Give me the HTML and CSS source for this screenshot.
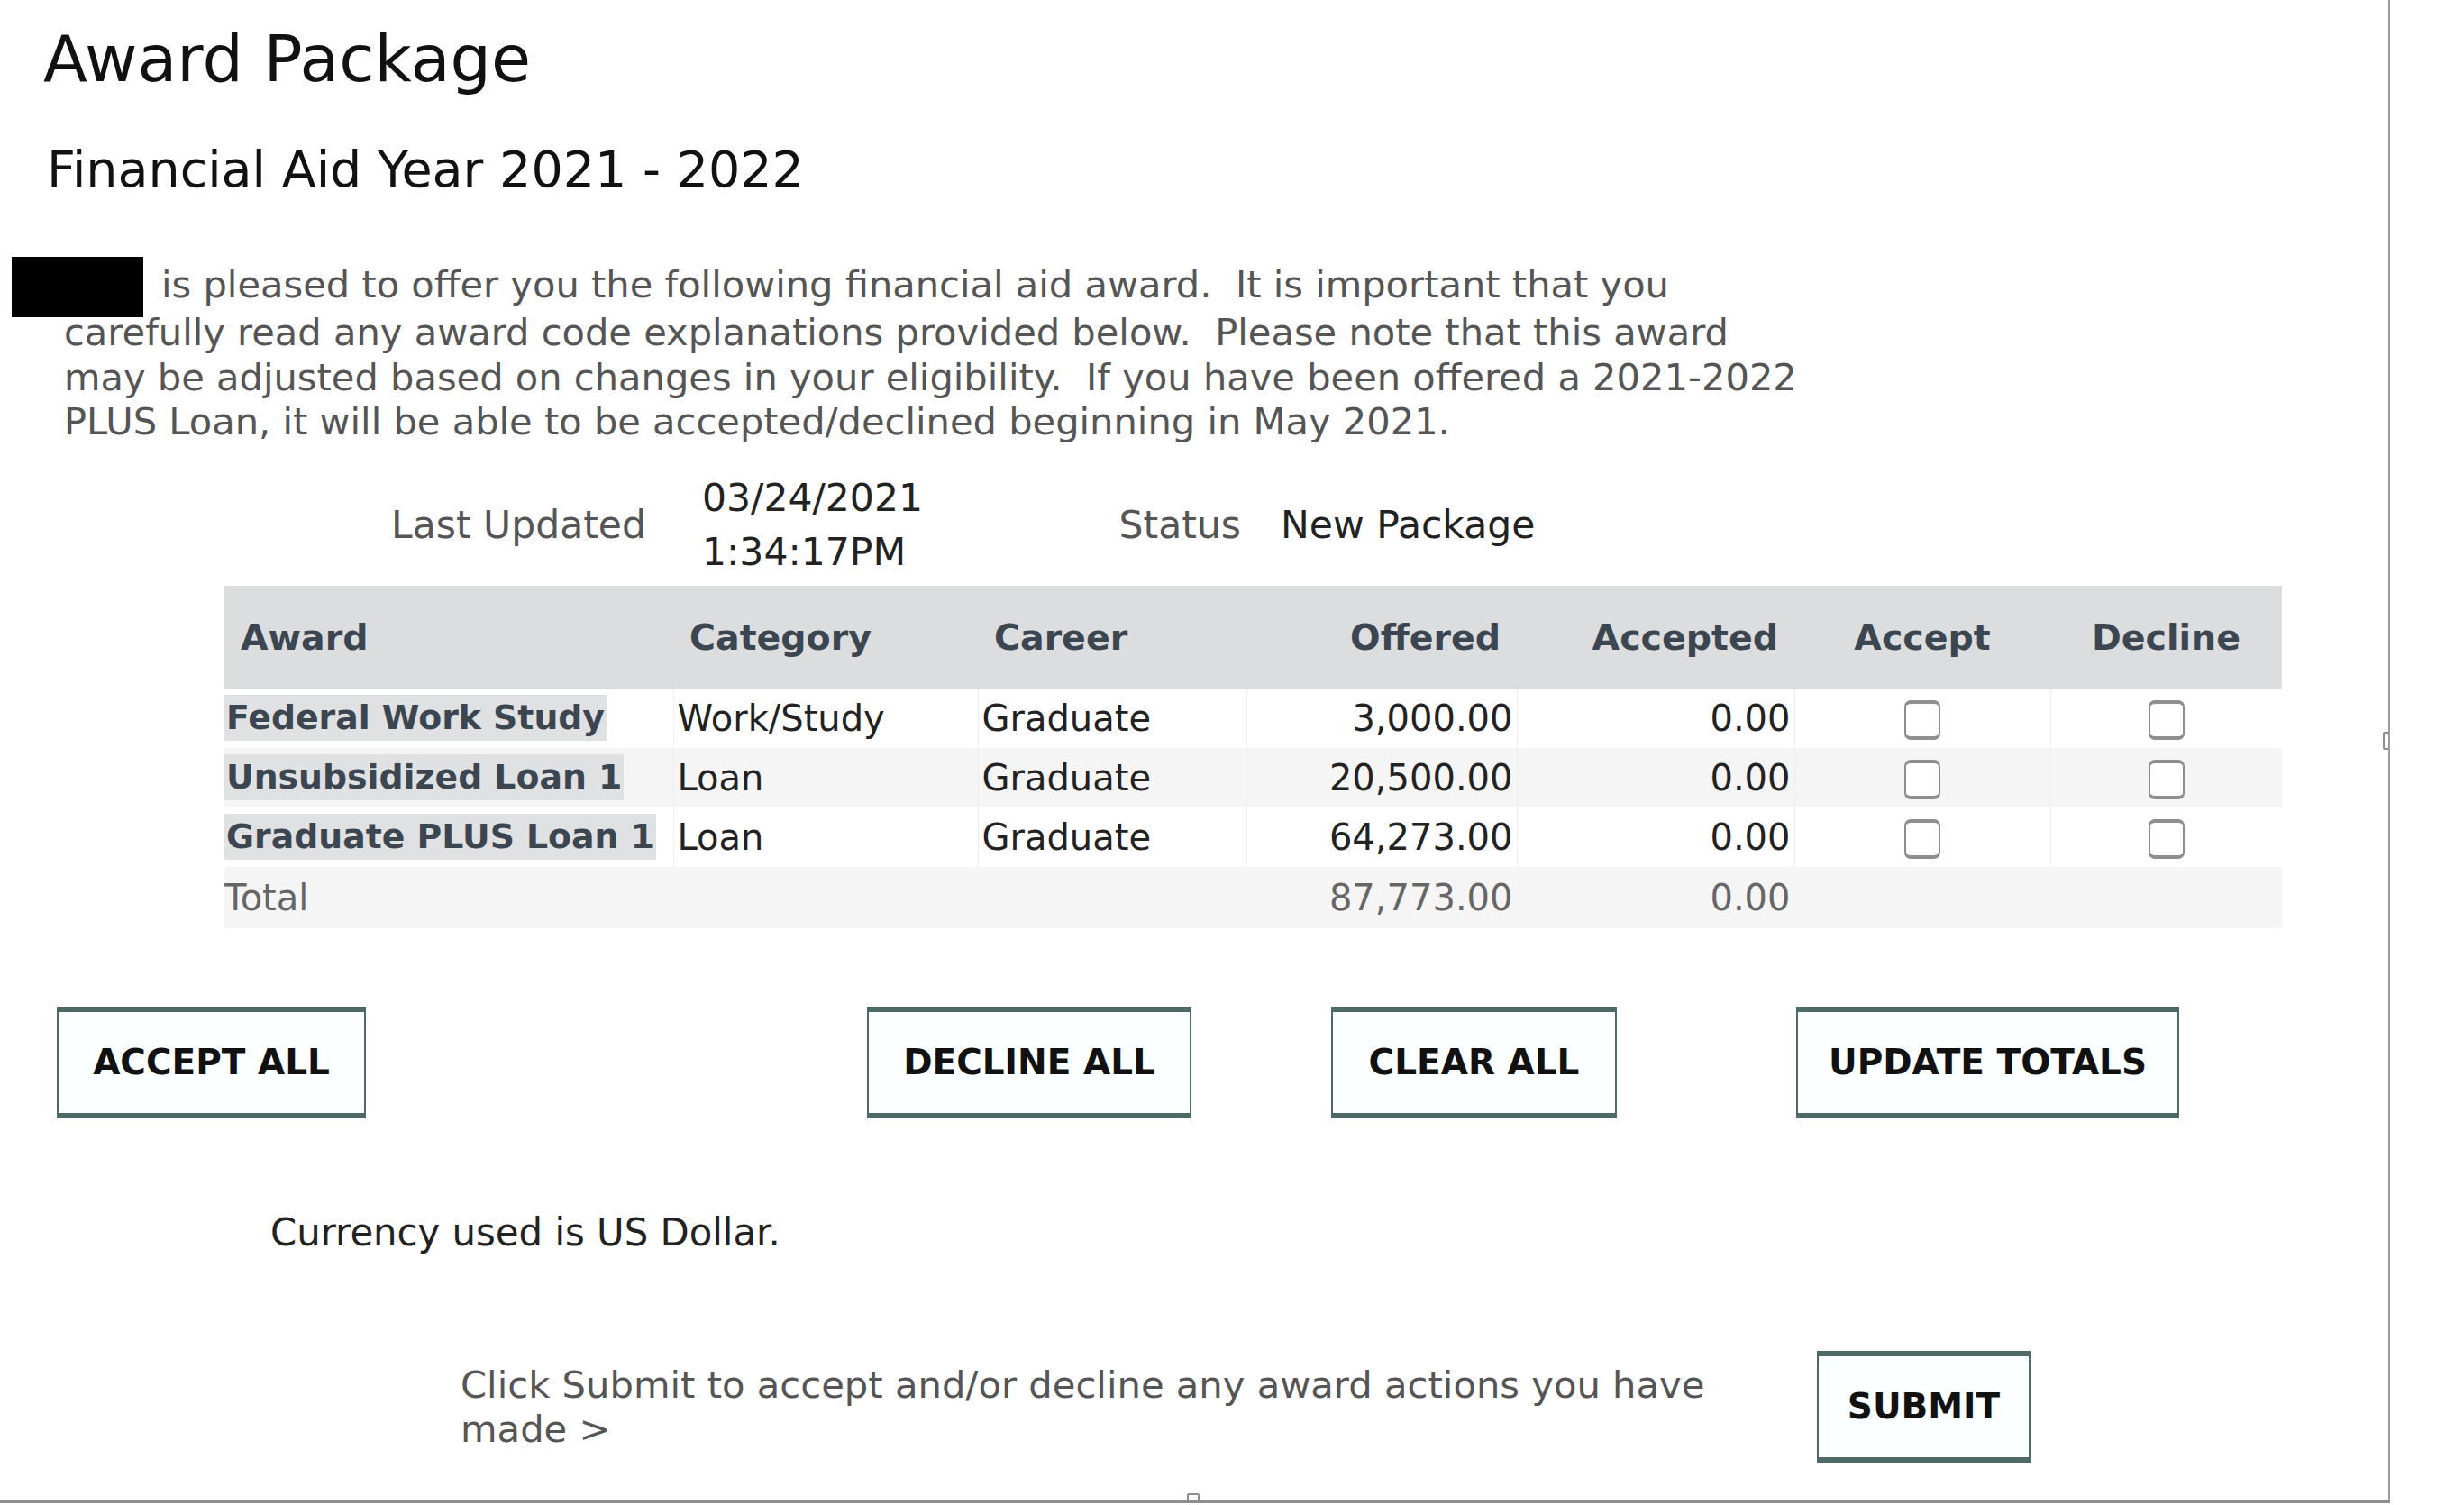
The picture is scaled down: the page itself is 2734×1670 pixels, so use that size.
FILE: index.html
```html
<!DOCTYPE html>
<html lang="en">
<head>
<meta charset="utf-8">
<title>Award Package</title>
<link rel="stylesheet" href="styles.css">
</head>
<body>
<div class="frame">
  <h1 class="title">Award Package</h1>
  <h2 class="subtitle">Financial Aid Year 2021 - 2022</h2>
  <p class="intro"><span class="redact"></span>is pleased to offer you the following financial aid award.&nbsp; It is important that you carefully read any award code explanations provided below.&nbsp; Please note that this award may be adjusted based on changes in your eligibility.&nbsp; If you have been offered a 2021&#8209;2022 PLUS Loan, it will be able to be accepted/declined beginning in May 2021.</p>

  <div class="meta">
    <span class="meta-label">Last Updated</span>
    <span class="meta-date">03/24/2021<br>1:34:17PM</span>
    <span class="meta-label meta-status">Status</span>
    <span class="meta-value">New Package</span>
  </div>

  <table class="awards">
    <colgroup>
      <col class="c-award"><col class="c-cat"><col class="c-career"><col class="c-off"><col class="c-acc"><col class="c-yes"><col class="c-no">
    </colgroup>
    <thead>
      <tr>
        <th class="left">Award</th>
        <th class="left">Category</th>
        <th class="left">Career</th>
        <th class="right">Offered</th>
        <th class="right">Accepted</th>
        <th class="center">Accept</th>
        <th class="center">Decline</th>
      </tr>
    </thead>
    <tbody>
      <tr>
        <td class="award"><span class="award-link">Federal Work Study</span></td>
        <td>Work/Study</td>
        <td>Graduate</td>
        <td class="num">3,000.00</td>
        <td class="num">0.00</td>
        <td class="center"><input type="checkbox" class="box"></td>
        <td class="center"><input type="checkbox" class="box"></td>
      </tr>
      <tr class="alt">
        <td class="award"><span class="award-link">Unsubsidized Loan 1</span></td>
        <td>Loan</td>
        <td>Graduate</td>
        <td class="num">20,500.00</td>
        <td class="num">0.00</td>
        <td class="center"><input type="checkbox" class="box"></td>
        <td class="center"><input type="checkbox" class="box"></td>
      </tr>
      <tr>
        <td class="award"><span class="award-link">Graduate PLUS Loan 1</span></td>
        <td>Loan</td>
        <td>Graduate</td>
        <td class="num">64,273.00</td>
        <td class="num">0.00</td>
        <td class="center"><input type="checkbox" class="box"></td>
        <td class="center"><input type="checkbox" class="box"></td>
      </tr>
      <tr class="total">
        <td class="award">Total</td>
        <td></td>
        <td></td>
        <td class="num">87,773.00</td>
        <td class="num">0.00</td>
        <td></td>
        <td></td>
      </tr>
    </tbody>
  </table>

  <div class="actions">
    <button class="btn btn-accept">ACCEPT ALL</button>
    <button class="btn btn-decline">DECLINE ALL</button>
    <button class="btn btn-clear">CLEAR ALL</button>
    <button class="btn btn-update">UPDATE TOTALS</button>
  </div>

  <p class="currency">Currency used is US Dollar.</p>

  <div class="submit-row">
    <p class="submit-text">Click Submit to accept and/or decline any award actions you have made &gt;</p>
    <button class="btn btn-submit">SUBMIT</button>
  </div>

  <span class="handle handle-right"></span>
  <span class="handle handle-bottom"></span>
</div>
</body>
</html>
```

FILE: styles.css
```css
html, body {
  margin: 0;
  padding: 0;
  background: #ffffff;
}

body {
  font-family: "DejaVu Sans", "Open Sans", sans-serif;
  color: #222;
}

.frame {
  position: relative;
  width: 2650px;
  height: 1665px;
  border-right: 2px solid #9a9a9a;
  border-bottom: 3px solid #8e8e8e;
  box-sizing: content-box;
  overflow: hidden;
}

.title {
  margin: 0;
  padding: 26px 0 0 48px;
  font-size: 71.5px;
  line-height: 80px;
  font-weight: 400;
  color: #111;
}

.subtitle {
  margin: 0;
  padding: 47px 0 0 52px;
  font-size: 55.5px;
  line-height: 70px;
  font-weight: 400;
  color: #111;
}

.intro {
  margin: 68px 0 0 71px;
  width: 1950px;
  font-size: 41.6px;
  line-height: 49.5px;
  color: #555;
}

.redact {
  display: inline-block;
  width: 146px;
  height: 67px;
  background: #000;
  vertical-align: -14px;
  margin: -12px 20px -8px -58px;
}

.meta {
  display: flex;
  align-items: center;
  margin: 30px 0 0 249px;
  font-size: 42.5px;
}

.meta-label {
  width: 468px;
  text-align: right;
  color: #555;
}

.meta-date {
  margin-left: 62px;
  width: 438px;
  line-height: 60px;
  color: #222;
}

.meta-status {
  width: 160px;
}

.meta-value {
  margin-left: 44px;
  color: #222;
}

.awards {
  margin: 7px 0 0 249px;
  border-collapse: collapse;
  table-layout: fixed;
  width: 2283px;
  font-size: 40px;
}

.c-award { width: 498px; }
.c-cat { width: 338px; }
.c-career { width: 298px; }
.c-off { width: 300px; }
.c-acc { width: 308px; }
.c-yes { width: 284px; }
.c-no { width: 257px; }

.awards thead tr {
  background: #dcdddf;
  height: 114px;
}

.awards th {
  font-weight: 700;
  font-size: 39.5px;
  color: #3c4651;
  padding: 0 18px;
  white-space: nowrap;
}

.left { text-align: left; }
.right { text-align: right; }
.center { text-align: center; }

.awards td {
  height: 66px;
  padding: 0 4px;
  border-left: 1px solid #ededed;
  white-space: nowrap;
  color: #222;
}

.awards td.award {
  border-left: none;
  padding: 0;
}

.awards tr.alt td,
.awards tr.total td {
  background: #f5f5f5;
}

.awards tr.total td {
  color: #666;
  height: 68px;
  border-left-color: #f5f5f5;
}

.num { text-align: right; }

.award-link {
  display: inline-block;
  background: #e0e1e3;
  color: #3c4651;
  font-weight: 700;
  font-size: 37.8px;
  padding: 0 2px;
  line-height: 51px;
}

.box {
  -webkit-appearance: none;
  appearance: none;
  width: 40px;
  height: 44px;
  margin: 0;
  border: 2px solid #8e8e8e;
  border-top-width: 4px;
  border-bottom-width: 4px;
  border-radius: 7px;
  background: #fff;
  vertical-align: middle;
}

.actions {
  display: grid;
  grid-template-columns: 899px 515px 516px auto;
  margin: 87px 0 0 63px;
}

.btn {
  font-family: "DejaVu Sans", "Open Sans", sans-serif;
  font-size: 39px;
  font-weight: 700;
  color: #111;
  background: #fcffff;
  border: 2px solid #4e6a67;
  border-top-width: 6px;
  border-bottom-width: 6px;
  height: 124px;
  padding: 0;
  box-sizing: border-box;
  justify-self: start;
  white-space: nowrap;
}

.btn-accept { width: 343px; }
.btn-decline { width: 360px; }
.btn-clear { width: 317px; }
.btn-update { width: 425px; }
.btn-submit { width: 237px; }

.currency {
  margin: 102px 0 0 300px;
  font-size: 41.8px;
  line-height: 50px;
  color: #222;
}

.submit-row {
  display: flex;
  align-items: center;
  margin: 106px 0 0 511px;
}

.submit-text {
  margin: 0;
  width: 1440px;
  font-size: 41.7px;
  line-height: 49px;
  color: #555;
}

.btn-submit {
  margin-left: 65px;
}

.handle {
  position: absolute;
  background: #fff;
  border: 2px solid #8e8e8e;
  border-radius: 2px;
}

.handle-right {
  right: -8px;
  top: 812px;
  width: 10px;
  height: 16px;
}

.handle-bottom {
  bottom: -6px;
  left: 1317px;
  width: 10px;
  height: 10px;
}
```
